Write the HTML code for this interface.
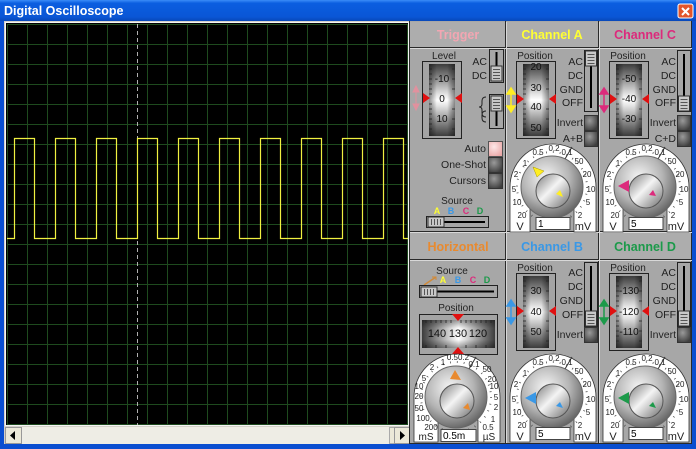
<!DOCTYPE html>
<html><head><meta charset="utf-8"><style>
html,body{margin:0;padding:0;background:#d4d0c8;width:696px;height:449px;overflow:hidden}
svg{position:absolute;left:0;top:0}
text{font-family:"Liberation Sans",Arial,sans-serif}
</style></head><body>
<svg width="696" height="449" viewBox="0 0 696 449" xmlns="http://www.w3.org/2000/svg">
<defs>
<linearGradient id="title" x1="0" y1="0" x2="0" y2="1"><stop offset="0" stop-color="#3a8cf8"/><stop offset=".15" stop-color="#0b5ee0"/><stop offset=".8" stop-color="#0a56d6"/><stop offset="1" stop-color="#0848b8"/></linearGradient>
<linearGradient id="dg" x1="0" y1="0" x2="0" y2="1"><stop offset="0" stop-color="#3c3c3c"/><stop offset=".42" stop-color="#e4e4e4"/><stop offset=".5" stop-color="#ffffff"/><stop offset=".58" stop-color="#e4e4e4"/><stop offset="1" stop-color="#3c3c3c"/></linearGradient>
<linearGradient id="dgx" x1="0" y1="0" x2="1" y2="0"><stop offset="0" stop-color="#000" stop-opacity=".45"/><stop offset=".3" stop-color="#000" stop-opacity="0"/><stop offset=".7" stop-color="#000" stop-opacity="0"/><stop offset="1" stop-color="#000" stop-opacity=".45"/></linearGradient>
<linearGradient id="hg" x1="0" y1="0" x2="1" y2="0"><stop offset="0" stop-color="#3c3c3c"/><stop offset=".42" stop-color="#e4e4e4"/><stop offset=".5" stop-color="#fff"/><stop offset=".58" stop-color="#e4e4e4"/><stop offset="1" stop-color="#3c3c3c"/></linearGradient>
<linearGradient id="hgy" x1="0" y1="0" x2="0" y2="1"><stop offset="0" stop-color="#000" stop-opacity=".4"/><stop offset=".3" stop-color="#000" stop-opacity="0"/><stop offset=".7" stop-color="#000" stop-opacity="0"/><stop offset="1" stop-color="#000" stop-opacity=".4"/></linearGradient>
<radialGradient id="knobG" cx=".4" cy=".35" r=".7"><stop offset="0" stop-color="#f6f6f6"/><stop offset=".55" stop-color="#b4b4b4"/><stop offset="1" stop-color="#5e5e5e"/></radialGradient>
<linearGradient id="innerG" x1="0" y1="0" x2="1" y2="1"><stop offset="0" stop-color="#7a7a7a"/><stop offset=".45" stop-color="#f4f4f4"/><stop offset=".6" stop-color="#d0d0d0"/><stop offset="1" stop-color="#6a6a6a"/></linearGradient>
<radialGradient id="btnG" cx=".4" cy=".35" r=".7"><stop offset="0" stop-color="#9a9a9a"/><stop offset="1" stop-color="#3e3e3e"/></radialGradient>
<radialGradient id="btnP" cx=".4" cy=".35" r=".7"><stop offset="0" stop-color="#fde8e8"/><stop offset="1" stop-color="#eaa8a8"/></radialGradient>
<pattern id="grid" x="7" y="24" width="20" height="20" patternUnits="userSpaceOnUse"><path d="M0.5,0 V20 M0,0.5 H20" stroke="#1e4a1e" stroke-width="1" fill="none"/></pattern>
<g id="dial">
 <path d="M4,92 V47 A42,42 0 0 1 90,47 V92 H68 V68 H24 V92 Z" fill="#fff" stroke="#333" stroke-width=".8"/>
 <line x1="66" y1="7" x2="59" y2="19" stroke="#333" stroke-width="1"/>
 <circle cx="46" cy="47" r="35" fill="none" stroke="#444" stroke-width="2" stroke-dasharray="0.7 6.2"/>
 <circle cx="46" cy="47" r="31" fill="url(#knobG)" stroke="#666"/>
 <circle cx="47" cy="51" r="17" fill="url(#innerG)" stroke="#555"/>
</g>
<g id="chlab" font-size="8" text-anchor="middle" fill="#222">
 <text x="32" y="15">0.5</text><text x="48" y="11">0.2</text><text x="61" y="15">0.1</text>
 <text x="19" y="26">1</text><text x="73" y="24">50</text>
 <text x="10" y="37">2</text><text x="81" y="37">20</text>
 <text x="8" y="52">5</text><text x="85" y="52">10</text>
 <text x="11" y="65">10</text><text x="82" y="65">5</text>
 <text x="16" y="78">20</text><text x="74" y="78">2</text>
 <text x="14" y="90" font-size="11">V</text><text x="77" y="90" font-size="11">mV</text>
 <rect x="30" y="77.5" width="34" height="12" fill="#fff" stroke="#444"/>
</g>
<g id="vthumb"><rect x="0" y="0" width="11" height="15" fill="#c8c8c8" stroke="#333"/><path d="M2,3.5H9M2,6.5H9M2,9.5H9M2,12.5H9" stroke="#555"/></g>
<g id="hthumb"><rect x="0" y="0" width="16" height="10" fill="#c8c8c8" stroke="#333"/><path d="M3.5,2V8M6.5,2V8M9.5,2V8M12.5,2V8" stroke="#555"/></g>
<g id="vdrum"><rect x=".5" y=".5" width="39" height="77" fill="#a4a4a4" stroke="#222"/><rect x="7" y="3" width="26" height="72" fill="url(#dg)"/><rect x="7" y="3" width="26" height="72" fill="url(#dgx)"/><path d="M7,8h3M7,13h3M7,18h3M7,23h3M7,28h3M7,33h3M7,43h3M7,48h3M7,53h3M7,58h3M7,63h3M7,68h3M30,8h3M30,18h3M30,28h3M30,48h3M30,58h3M30,68h3" stroke="#222" stroke-width=".8"/></g>
</defs>

<rect x="0" y="0" width="696" height="449" fill="#0a4ed0"/>
<rect x="0" y="0" width="696" height="21" fill="url(#title)"/>
<text x="4" y="15" font-size="12.5" font-weight="bold" fill="#fff">Digital Oscilloscope</text>
<rect x="678" y="4" width="15" height="14" rx="2" fill="#e2552c" stroke="#fff"/>
<path d="M682,8 L689,15 M689,8 L682,15" stroke="#fff" stroke-width="2"/>
<rect x="4" y="21" width="688" height="423" fill="#d4d0c8"/>

<rect x="5.5" y="22.5" width="403" height="403" fill="#000" stroke="#f4f4f4"/>
<rect x="7" y="24" width="401" height="401" fill="url(#grid)"/>
<line x1="137.5" y1="24" x2="137.5" y2="425" stroke="#b0b0b0" stroke-dasharray="4 3"/>
<polyline fill="none" stroke="#f0f040" stroke-width="1.2" points="7,238.5 14.5,238.5 14.5,138.5 34.5,138.5 34.5,238.5 55.5,238.5 55.5,138.5 75.5,138.5 75.5,238.5 96.5,238.5 96.5,138.5 116.5,138.5 116.5,238.5 137.5,238.5 137.5,138.5 157.5,138.5 157.5,238.5 178.5,238.5 178.5,138.5 198.5,138.5 198.5,238.5 219.5,238.5 219.5,138.5 239.5,138.5 239.5,238.5 260.5,238.5 260.5,138.5 280.5,138.5 280.5,238.5 301.5,238.5 301.5,138.5 321.5,138.5 321.5,238.5 342.5,238.5 342.5,138.5 362.5,138.5 362.5,238.5 383.5,238.5 383.5,138.5 403.5,138.5 403.5,238.5 408,238.5"/>

<rect x="5" y="427" width="405" height="17" fill="#eeede5"/>
<rect x="5.5" y="427.5" width="16" height="16" fill="#ece9d8" stroke="#999"/>
<path d="M10,435.5 L15,431 V440 Z" fill="#000"/>
<rect x="389.5" y="427.5" width="5" height="16" fill="#ece9d8" stroke="#aaa"/>
<rect x="394.5" y="427.5" width="15" height="16" fill="#ece9d8" stroke="#999"/>
<path d="M405,435.5 L400,431 V440 Z" fill="#000"/>

<rect x="409" y="21" width="283" height="423" fill="#a7a7a7"/>
<rect x="410" y="22" width="95" height="25" fill="#adadad"/><rect x="506" y="22" width="92" height="25" fill="#adadad"/><rect x="599" y="22" width="92" height="25" fill="#adadad"/>
<rect x="410" y="233" width="95" height="26" fill="#adadad"/><rect x="506" y="233" width="92" height="26" fill="#adadad"/><rect x="599" y="233" width="92" height="26" fill="#adadad"/>
<g stroke="#2a2a2a" stroke-width="1">
<line x1="409.5" y1="21" x2="409.5" y2="444"/><line x1="505.5" y1="21" x2="505.5" y2="444"/><line x1="598.5" y1="21" x2="598.5" y2="444"/><line x1="691.5" y1="21" x2="691.5" y2="444"/>
<line x1="409" y1="47.5" x2="692" y2="47.5"/><line x1="409" y1="231.5" x2="692" y2="231.5"/><line x1="409" y1="259.5" x2="692" y2="259.5"/><line x1="409" y1="443.5" x2="692" y2="443.5"/>
</g>
<g stroke="#d8d8d8"><line x1="410" y1="48.5" x2="692" y2="48.5"/><line x1="410" y1="260.5" x2="692" y2="260.5"/><line x1="410" y1="232.5" x2="692" y2="232.5"/><line x1="506.5" y1="22" x2="506.5" y2="443"/><line x1="599.5" y1="22" x2="599.5" y2="443"/></g>

<g font-size="12.5" font-weight="bold" text-anchor="middle">
<text x="458" y="39" fill="#f2a6b2">Trigger</text>
<text x="552" y="39" fill="#ffff33">Channel A</text>
<text x="645" y="39" fill="#dc2a7c">Channel C</text>
<text x="458" y="251" fill="#e88a30">Horizontal</text>
<text x="552" y="251" fill="#3a98e6">Channel B</text>
<text x="645" y="251" fill="#1c9a4a">Channel D</text>
</g>

<text x="444" y="59" font-size="10" text-anchor="middle" fill="#222">Level</text>
<use href="#vdrum" x="422" y="61"/>
<g font-size="10" text-anchor="middle" fill="#111"><text x="442" y="82">-10</text><text x="442" y="102">0</text><text x="442" y="122">10</text></g>
<path d="M423,93 L430,98 L423,103 Z M462,93 L455,98 L462,103 Z" fill="#e01010"/>
<path d="M416,86 l-3,6 h6 z M416,110 l-3,-6 h6 z M416,92 V104" fill="#f08c9c" stroke="#f08c9c" opacity=".8"/>
<g font-size="10.5" text-anchor="end" fill="#222"><text x="487" y="65">AC</text><text x="487" y="79">DC</text></g>
<rect x="489.5" y="49.5" width="14" height="33" fill="#a7a7a7" stroke="#222"/>
<line x1="496.5" y1="52" x2="496.5" y2="66" stroke="#000" stroke-width="2"/>
<use href="#vthumb" x="491" y="66"/>
<path d="M486,97 q-4,0 -4,4 v3 q0,3 -3,3 q3,0 3,3 v3 q0,4 4,4 M486,111 q-4,0 -4,4 v3 q0,4 4,4" fill="none" stroke="#222" stroke-width="1"/>
<rect x="489.5" y="94.5" width="14" height="34" fill="#a7a7a7" stroke="#222"/>
<line x1="496.5" y1="110" x2="496.5" y2="126" stroke="#000" stroke-width="2"/>
<use href="#vthumb" x="491" y="96"/>
<g font-size="10.5" text-anchor="end" fill="#222"><text x="486" y="152">Auto</text><text x="486" y="168">One-Shot</text><text x="486" y="184">Cursors</text></g>
<rect x="488.5" y="141.5" width="14" height="15" fill="url(#btnP)" stroke="#555"/>
<rect x="488.5" y="157.5" width="14" height="15" fill="url(#btnG)" stroke="#333"/>
<rect x="488.5" y="173.5" width="14" height="15" fill="url(#btnG)" stroke="#333"/>
<text x="457" y="204" font-size="10" text-anchor="middle" fill="#222">Source</text>
<g font-size="9" font-weight="bold" text-anchor="middle"><text x="437" y="214" fill="#ffff33">A</text><text x="451" y="214" fill="#3a98e6">B</text><text x="466" y="214" fill="#dc2a7c">C</text><text x="480" y="214" fill="#1c9a4a">D</text></g>
<rect x="426.5" y="216.5" width="62" height="11" fill="#a7a7a7" stroke="#222"/>
<line x1="430" y1="222" x2="485" y2="222" stroke="#000" stroke-width="2"/>
<use href="#hthumb" x="428" y="217"/>

<text x="535" y="59" font-size="10" text-anchor="middle" fill="#222">Position</text>
<use href="#vdrum" x="516" y="61"/>
<g font-size="10" text-anchor="middle" fill="#111"><text x="536" y="70">20</text><text x="536" y="91">30</text><text x="536" y="110">40</text><text x="536" y="131">50</text></g>
<path d="M517,94 L524,99 L517,104 Z M556,94 L549,99 L556,104 Z" fill="#e01010"/>
<path d="M511,88 l-4,6 h8 z M511,112 l-4,-6 h8 z M511,93 V107" fill="#ffee22" stroke="#ffee22" stroke-width="1.5"/>
<g font-size="10.5" text-anchor="end" fill="#222"><text x="583" y="65">AC</text><text x="583" y="79">DC</text><text x="583" y="93">GND</text><text x="583" y="106">OFF</text><text x="583" y="126">Invert</text><text x="583" y="142">A+B</text></g>
<rect x="584.5" y="50.5" width="13" height="61" fill="#a7a7a7" stroke="#222"/>
<line x1="591" y1="64" x2="591" y2="108" stroke="#000" stroke-width="2"/>
<use href="#vthumb" x="585.5" y="51"/>
<rect x="584.5" y="115.5" width="13" height="15" fill="url(#btnG)" stroke="#333"/>
<rect x="584.5" y="131.5" width="13" height="15" fill="url(#btnG)" stroke="#333"/>
<g transform="translate(506,140)"><use href="#dial"/><use href="#chlab"/><text x="32" y="87" font-size="10" fill="#000">1</text>
<polygon points="27,27 38,31 31,37" fill="#ffee22" stroke="#aa9900" stroke-width=".5"/><polygon points="57,57 50,54 54,50" fill="#ffee22"/></g>

<text x="628" y="59" font-size="10" text-anchor="middle" fill="#222">Position</text>
<use href="#vdrum" x="609" y="61"/>
<g font-size="10" text-anchor="middle" fill="#111"><text x="629" y="82">-50</text><text x="629" y="102">-40</text><text x="629" y="122">-30</text></g>
<path d="M610,94 L617,99 L610,104 Z M649,94 L642,99 L649,104 Z" fill="#e01010"/>
<path d="M604,88 l-4,6 h8 z M604,112 l-4,-6 h8 z M604,93 V107" fill="#dc2a7c" stroke="#dc2a7c" stroke-width="1.5"/>
<g font-size="10.5" text-anchor="end" fill="#222"><text x="676" y="65">AC</text><text x="676" y="79">DC</text><text x="676" y="93">GND</text><text x="676" y="106">OFF</text><text x="676" y="126">Invert</text><text x="676" y="142">C+D</text></g>
<rect x="677.5" y="50.5" width="13" height="61" fill="#a7a7a7" stroke="#222"/>
<line x1="684" y1="54" x2="684" y2="96" stroke="#000" stroke-width="2"/>
<use href="#vthumb" x="678.5" y="96"/>
<rect x="677.5" y="115.5" width="13" height="15" fill="url(#btnG)" stroke="#333"/>
<rect x="677.5" y="131.5" width="13" height="15" fill="url(#btnG)" stroke="#333"/>
<g transform="translate(599,140)"><use href="#dial"/><use href="#chlab"/><text x="32" y="87" font-size="10" fill="#000">5</text>
<polygon points="19,46 30,40 30,52" fill="#dc2a7c"/><polygon points="57,56 50,55 54,50" fill="#dc2a7c"/></g>

<text x="452" y="274" font-size="10" text-anchor="middle" fill="#222">Source</text>
<path d="M424,285 L436,277" stroke="#d08a3a" stroke-width="1.5"/><path d="M432,277 h4 v3" fill="none" stroke="#d08a3a"/>
<g font-size="9" font-weight="bold" text-anchor="middle"><text x="443" y="283" fill="#ffff33">A</text><text x="458" y="283" fill="#3a98e6">B</text><text x="473" y="283" fill="#dc2a7c">C</text><text x="487" y="283" fill="#1c9a4a">D</text></g>
<rect x="419.5" y="285.5" width="78" height="12" fill="#a7a7a7" stroke="#222"/>
<line x1="424" y1="291.5" x2="494" y2="291.5" stroke="#000" stroke-width="2"/>
<use href="#hthumb" x="421" y="287"/>
<text x="456" y="311" font-size="10" text-anchor="middle" fill="#222">Position</text>
<rect x="419.5" y="314.5" width="78" height="40" fill="#a4a4a4" stroke="#222"/>
<rect x="422" y="320" width="73" height="28" fill="url(#hg)"/><rect x="422" y="320" width="73" height="28" fill="url(#hgy)"/>
<path d="M426,320v3M431,320v3M436,320v3M441,320v3M446,320v3M451,320v3M461,320v3M466,320v3M471,320v3M476,320v3M481,320v3M486,320v3M491,320v3M426,345v3M436,345v3M446,345v3M466,345v3M476,345v3M486,345v3" stroke="#222" stroke-width=".8"/>
<g font-size="11" text-anchor="middle" fill="#111"><text x="437" y="337">140</text><text x="458" y="337">130</text><text x="478" y="337">120</text></g>
<path d="M452,314 L458,321 L464,314 Z M452,354 L458,347 L464,354 Z" fill="#e01010"/>
<g transform="translate(410,350)">
 <path d="M4,92 V47 A42,42 0 0 1 90,47 V92 H68 V70 H28 V92 Z" fill="#fff" stroke="#333" stroke-width=".8"/>
 <line x1="66" y1="7" x2="59" y2="19" stroke="#333"/>
 <circle cx="46" cy="47" r="35" fill="none" stroke="#444" stroke-width="2" stroke-dasharray="0.7 6.2"/>
 <circle cx="46" cy="47" r="31" fill="url(#knobG)" stroke="#666"/>
 <circle cx="47" cy="51" r="17" fill="url(#innerG)" stroke="#555"/>
 <g font-size="8" text-anchor="middle" fill="#222">
 <text x="22" y="20">2</text><text x="33" y="15">1</text><text x="48" y="10">0.50.2</text><text x="64" y="17">0.1</text>
 <text x="14" y="31">5</text><text x="77" y="22">50</text>
 <text x="9" y="39">10</text><text x="82" y="32">20</text>
 <text x="9" y="49">20</text><text x="84" y="39">10</text>
 <text x="9" y="61">50</text><text x="86" y="50">5</text>
 <text x="13" y="71">100</text><text x="86" y="60">2</text>
 <text x="21" y="80">200</text><text x="83" y="72">1</text><text x="78" y="80">0.5</text>
 <text x="16" y="90" font-size="10">mS</text><text x="79" y="90" font-size="10">µS</text>
 </g>
 <rect x="31" y="79.5" width="35" height="12" fill="#fff" stroke="#444"/>
 <text x="33" y="89" font-size="10" fill="#000">0.5m</text>
 <polygon points="45,20 51,30 40,29" fill="#e88a30"/><polygon points="60,60 53,58 58,53" fill="#e88a30"/>
</g>

<text x="535" y="271" font-size="10" text-anchor="middle" fill="#222">Position</text>
<use href="#vdrum" x="516" y="273"/>
<g font-size="10" text-anchor="middle" fill="#111"><text x="536" y="294">30</text><text x="536" y="315">40</text><text x="536" y="335">50</text></g>
<path d="M517,306 L524,311 L517,316 Z M556,306 L549,311 L556,316 Z" fill="#e01010"/>
<path d="M511,300 l-4,6 h8 z M511,324 l-4,-6 h8 z M511,305 V319" fill="#3a98e6" stroke="#3a98e6" stroke-width="1.5"/>
<g font-size="10.5" text-anchor="end" fill="#222"><text x="583" y="276">AC</text><text x="583" y="290">DC</text><text x="583" y="304">GND</text><text x="583" y="318">OFF</text><text x="583" y="338">Invert</text></g>
<rect x="584.5" y="262.5" width="13" height="64" fill="#a7a7a7" stroke="#222"/>
<line x1="591" y1="266" x2="591" y2="311" stroke="#000" stroke-width="2"/>
<use href="#vthumb" x="585.5" y="311"/>
<rect x="584.5" y="327.5" width="13" height="15" fill="url(#btnG)" stroke="#333"/>
<g transform="translate(506,350)"><use href="#dial"/><use href="#chlab"/><text x="32" y="87" font-size="10" fill="#000">5</text>
<polygon points="19,48 30,42 30,54" fill="#3a98e6"/><polygon points="57,58 50,56 54,52" fill="#3a98e6"/></g>

<text x="628" y="271" font-size="10" text-anchor="middle" fill="#222">Position</text>
<use href="#vdrum" x="609" y="273"/>
<g font-size="10" text-anchor="middle" fill="#111"><text x="629" y="294">-130</text><text x="629" y="315">-120</text><text x="629" y="335">-110</text></g>
<path d="M610,306 L617,311 L610,316 Z M649,306 L642,311 L649,316 Z" fill="#e01010"/>
<path d="M604,300 l-4,6 h8 z M604,324 l-4,-6 h8 z M604,305 V319" fill="#1c9a4a" stroke="#1c9a4a" stroke-width="1.5"/>
<g font-size="10.5" text-anchor="end" fill="#222"><text x="676" y="276">AC</text><text x="676" y="290">DC</text><text x="676" y="304">GND</text><text x="676" y="318">OFF</text><text x="676" y="338">Invert</text></g>
<rect x="677.5" y="262.5" width="13" height="64" fill="#a7a7a7" stroke="#222"/>
<line x1="684" y1="266" x2="684" y2="311" stroke="#000" stroke-width="2"/>
<use href="#vthumb" x="678.5" y="311"/>
<rect x="677.5" y="327.5" width="13" height="15" fill="url(#btnG)" stroke="#333"/>
<g transform="translate(599,350)"><use href="#dial"/><use href="#chlab"/><text x="32" y="87" font-size="10" fill="#000">5</text>
<polygon points="19,48 30,42 30,54" fill="#1c9a4a"/><polygon points="57,58 50,56 54,52" fill="#1c9a4a"/></g>
</svg>
</body></html>
